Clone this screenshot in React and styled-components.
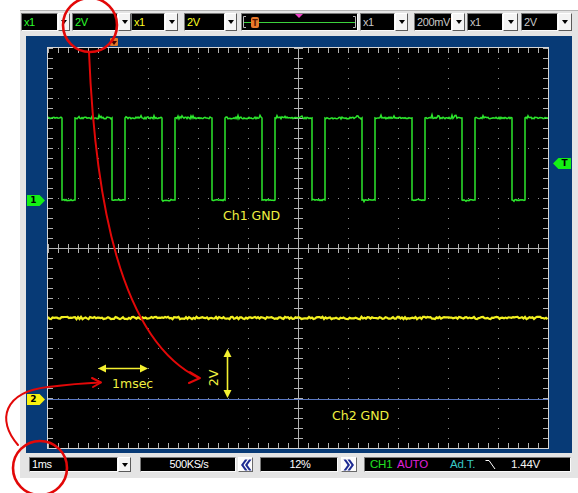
import React from 'react'
import styled, { createGlobalStyle } from 'styled-components'

const GlobalStyle = createGlobalStyle`
  html, body {
    margin: 0;
    padding: 0;
    background: #fff;
  }
  body {
    font-family: "Liberation Sans", Arial, sans-serif;
  }
`

const Page = styled.div`
  position: relative;
  width: 578px;
  height: 493px;
  overflow: hidden;
  padding: 10px 0 0 20px;
  box-sizing: border-box;
  background: #fff;
`

const Window = styled.div`
  width: 558px;
  height: 468px;
  background: #e4e4e4;
  border-top: 1px solid #b4b4b4;
  box-sizing: border-box;
  display: flex;
  flex-direction: column;
`

const Toolbar = styled.div`
  display: flex;
  height: 18px;
  margin: 2px 0 0 1px;
`

const BottomBar = styled.div`
  display: flex;
  height: 15px;
  margin: 4px 0 0 9px;
`

const Combo = styled.div`
  display: flex;
  margin-left: ${p => p.$ml || 0}px;
`

const Field = styled.div`
  width: ${p => p.$w}px;
  background: #000;
  color: ${p => p.$color || '#fff'};
  font-size: 11px;
  letter-spacing: -0.4px;
  line-height: ${p => (p.$small ? 13 : 16)}px;
  padding-left: 2px;
  text-align: ${p => (p.$center ? 'center' : 'left')};
  box-sizing: border-box;
  border: 1px solid;
  border-color: #7a7a7a #fafafa #fafafa #7a7a7a;
  white-space: nowrap;
  overflow: hidden;
`

const DropBtn = styled.div`
  width: ${p => p.$w}px;
  background: #f4f4f4;
  border: 1px solid;
  border-color: #ffffff #5a5a5a #5a5a5a #ffffff;
  box-sizing: border-box;
  display: flex;
  align-items: center;
  justify-content: center;

  &::after {
    content: '';
    border-left: 3.5px solid transparent;
    border-right: 3.5px solid transparent;
    border-top: 4px solid #000;
  }
`

const Slider = styled.div`
  width: 117px;
  margin-left: 4px;
  background: #000;
  border: 1px solid;
  border-color: #7a7a7a #fafafa #fafafa #7a7a7a;
  box-sizing: border-box;

  svg {
    display: block;
  }
`

const NavBtn = styled.div`
  width: ${p => p.$w}px;
  margin-left: ${p => p.$ml || 0}px;
  background: #fcfcfc;
  border: 1px solid;
  border-color: #ffffff #6a6a6a #6a6a6a #ffffff;
  box-sizing: border-box;
  display: flex;
  align-items: center;
  justify-content: center;
`

const Status = styled.div`
  display: flex;
  width: 207px;
  margin-left: 7px;
  background: #000;
  border: 1px solid;
  border-color: #7a7a7a #fafafa #fafafa #7a7a7a;
  box-sizing: border-box;
  padding-left: 5px;
  font-size: 11.5px;
  letter-spacing: -0.2px;
  line-height: 13px;
  align-items: center;
`

const Label = styled.span`
  width: ${p => p.$w}px;
  color: ${p => p.$color};
  flex-shrink: 0;
  display: flex;
  align-items: center;
`

const Panel = styled.div`
  position: relative;
  width: 546px;
  height: 417px;
  margin: 5px 0 0 6px;
  padding: 12px 24px 5px 22px;
  box-sizing: border-box;
  background: #073a76;
`

const Screen = styled.div`
  width: 500px;
  height: 400px;
  background: #000;
  box-shadow: 0 0 0 1px #d6d6d6;

  svg {
    display: block;
  }
`

const Marker = styled.div`
  position: absolute;
  top: ${p => p.$top}px;
  left: ${p => p.$left}px;
  width: 18px;
  height: 11px;
  background: ${p => p.$bg};
  clip-path: ${p =>
    p.$dir === 'left'
      ? 'polygon(0 50%, 30% 0, 100% 0, 100% 100%, 30% 100%)'
      : 'polygon(0 0, 70% 0, 100% 50%, 70% 100%, 0 100%)'};
  color: #000;
  font-family: "DejaVu Sans", sans-serif;
  font-size: 9px;
  font-weight: bold;
  line-height: 11px;
  text-align: center;
  padding: ${p => (p.$dir === 'left' ? '0 0 0 5px' : '0 5px 0 0')};
  box-sizing: border-box;
`

const TrigPos = styled.div`
  position: absolute;
  top: 2px;
  left: 84px;
  width: 8px;
  height: 8px;
  background: #e07a2a;
  border-radius: 1px;

  &::after {
    content: '';
    position: absolute;
    left: 1px;
    top: 3px;
    border-left: 3px solid transparent;
    border-right: 3px solid transparent;
    border-top: 4px solid #400;
  }
`

const Overlay = styled.svg`
  position: absolute;
  top: 0;
  left: 0;
  pointer-events: none;
`

const rand = seed => {
  let s = seed
  return () => {
    s = (s * 16807) % 2147483647
    return s / 2147483647
  }
}

const ch1Points = (() => {
  const r = rand(11)
  const hi = 70
  const lo = 152
  const pts = []
  const high = x => pts.push([x, hi + (r() - 0.5) * 1.8 - (r() > 0.85 ? r() * 3 : 0)])
  const low = x => pts.push([x, lo + (r() - 0.5) * 1.2 + (r() > 0.9 ? r() * 1.6 : 0)])
  let from = 0
  for (let k = 0; k < 10; k++) {
    const fall = 14 + 50 * k
    const rise = 27 + 50 * k
    for (let x = from; x < fall; x++) high(x)
    pts.push([fall, hi])
    pts.push([fall, lo])
    for (let x = fall + 1; x < rise; x++) low(x)
    pts.push([rise, lo])
    pts.push([rise, hi])
    from = rise + 1
  }
  for (let x = from; x <= 500; x++) high(x)
  return pts.map(p => p[0] + ',' + p[1].toFixed(1)).join(' ')
})()

const ch2Points = (() => {
  const r = rand(29)
  const pts = []
  for (let x = 0; x <= 500; x += 1.5) pts.push(x + ',' + (270 + (r() - 0.5) * 2.4).toFixed(1))
  return pts.join(' ')
})()

const majorX = [50, 100, 150, 200, 300, 350, 400, 450]
const majorY = [50, 100, 150, 250, 300, 350]

const topRow = [
  { ml: 0, w: 37, bw: 12, text: 'x1', color: '#2cff2c' },
  { ml: 2, w: 46, bw: 13, text: '2V', color: '#2cff2c' },
  { ml: 0, w: 34, bw: 13, text: 'x1', color: '#ffff20' },
  { ml: 6, w: 41, bw: 12, text: '2V', color: '#ffff20' },
]

const topRowRight = [
  { ml: 2, w: 35, bw: 13, text: 'x1', color: '#c8c8c8' },
  { ml: 6, w: 38, bw: 13, text: '200mV', color: '#c8c8c8' },
  { ml: 2, w: 36, bw: 15, text: 'x1', color: '#c8c8c8' },
  { ml: 3, w: 37, bw: 14, text: '2V', color: '#c8c8c8' },
]

function Chevrons({ dir }) {
  const flip = dir === 'right' ? 'translate(12,0) scale(-1,1)' : undefined
  return (
    <svg width="12" height="12" viewBox="0 0 12 12">
      <g transform={flip} fill="#1c2a92">
        <polygon points="5,0.5 7.5,0.5 3.5,6 7.5,11.5 5,11.5 1,6" />
        <polygon points="9,0.5 11.5,0.5 7.5,6 11.5,11.5 9,11.5 5,6" />
      </g>
    </svg>
  )
}

function Scope() {
  return (
    <svg width="500" height="400" viewBox="0 0 500 400" shapeRendering="crispEdges">
      <g stroke="#8c8c8c" strokeWidth="1" strokeDasharray="1 9">
        {majorX.map(x => (
          <line key={'x' + x} x1={x + 0.5} y1="0" x2={x + 0.5} y2="400" />
        ))}
        {majorY.map(y => (
          <line key={'y' + y} x1="0" y1={y + 0.5} x2="500" y2={y + 0.5} />
        ))}
      </g>
      <g stroke="#b4b4b4">
        <line x1="250.5" y1="0" x2="250.5" y2="400" />
        <line x1="0" y1="200.5" x2="500" y2="200.5" />
        <line x1="250.5" y1="0" x2="250.5" y2="400" strokeWidth="9" strokeDasharray="1 9" />
        <line x1="0" y1="200.5" x2="500" y2="200.5" strokeWidth="9" strokeDasharray="1 9" />
        <line x1="0" y1="2.5" x2="500" y2="2.5" strokeWidth="5" strokeDasharray="1 9" />
        <line x1="0" y1="397.5" x2="500" y2="397.5" strokeWidth="5" strokeDasharray="1 9" />
        <line x1="2.5" y1="0" x2="2.5" y2="400" strokeWidth="5" strokeDasharray="1 9" />
        <line x1="497.5" y1="0" x2="497.5" y2="400" strokeWidth="5" strokeDasharray="1 9" />
      </g>
      <line x1="0" y1="351.5" x2="500" y2="351.5" stroke="#5a78c2" />
      <g shapeRendering="auto">
        <polyline points={ch1Points} fill="none" stroke="#2ce62c" strokeWidth="1.5" />
        <polyline points={ch2Points} fill="none" stroke="#f2f020" strokeWidth="2.2" />
        <g fill="#f4f030" stroke="#f4f030">
          <line x1="55" y1="320.5" x2="95" y2="320.5" strokeWidth="1.6" />
          <polygon points="50,320.5 58,316.5 58,324.5" stroke="none" />
          <polygon points="100,320.5 92,316.5 92,324.5" stroke="none" />
          <line x1="179.5" y1="306" x2="179.5" y2="345" strokeWidth="1.6" />
          <polygon points="179.5,301 175.5,309 183.5,309" stroke="none" />
          <polygon points="179.5,350 175.5,342 183.5,342" stroke="none" />
        </g>
        <g fill="#f0f040" fontFamily='"DejaVu Sans", sans-serif' fontSize="12.5">
          <text x="175" y="172">Ch1 GND</text>
          <text x="284" y="372">Ch2 GND</text>
          <text x="64" y="340">1msec</text>
          <text transform="translate(170,330) rotate(-90)" textAnchor="middle">2V</text>
        </g>
      </g>
    </svg>
  )
}

export default function App() {
  return (
    <Page>
      <GlobalStyle />
      <Window>
        <Toolbar>
          {topRow.map((c, i) => (
            <Combo key={i} $ml={c.ml}>
              <Field $w={c.w} $color={c.color}>{c.text}</Field>
              <DropBtn $w={c.bw} />
            </Combo>
          ))}
          <Slider>
            <svg width="115" height="16" viewBox="0 0 115 16">
              <g stroke="#b8b8b8" fill="none">
                <polyline points="4,2.5 1.5,2.5 1.5,13.5 4,13.5" />
                <polyline points="111,2.5 113.5,2.5 113.5,13.5 111,13.5" />
              </g>
              <line x1="2" y1="8.5" x2="113" y2="8.5" stroke="#3cd23c" />
              <polygon points="53,0 61,0 57,4" fill="#f040c8" />
              <rect x="9" y="3" width="8" height="11" rx="2" fill="#e8782a" />
              <text x="13" y="12" fontSize="8" fontWeight="bold" textAnchor="middle" fill="#5a1800" fontFamily='"DejaVu Sans", sans-serif'>T</text>
            </svg>
          </Slider>
          {topRowRight.map((c, i) => (
            <Combo key={i} $ml={c.ml}>
              <Field $w={c.w} $color={c.color}>{c.text}</Field>
              <DropBtn $w={c.bw} />
            </Combo>
          ))}
        </Toolbar>

        <Panel>
          <Screen>
            <Scope />
          </Screen>
          <TrigPos />
          <Marker $top={159} $left={1} $bg="#14f014">1</Marker>
          <Marker $top={358} $left={1} $bg="#f8f010">2</Marker>
          <Marker $top={122} $left={527} $bg="#14f014" $dir="left">T</Marker>
        </Panel>

        <BottomBar>
          <Combo>
            <Field $w={89} $small>1ms</Field>
            <DropBtn $w={13} />
          </Combo>
          <Combo $ml={9}>
            <Field $w={96} $small $center>500KS/s</Field>
          </Combo>
          <NavBtn $w={15} $ml={2}>
            <Chevrons dir="left" />
          </NavBtn>
          <Combo $ml={7}>
            <Field $w={78} $small $center>12%</Field>
          </Combo>
          <NavBtn $w={16} $ml={3}>
            <Chevrons dir="right" />
          </NavBtn>
          <Status>
            <Label $w={27} $color="#22e022">CH1</Label>
            <Label $w={53} $color="#e020d8">AUTO</Label>
            <Label $w={35} $color="#38c8c8">Ad.T.</Label>
            <Label $w={26} $color="#fff">
              <svg width="12" height="11" viewBox="0 0 12 11">
                <polyline points="0.5,1.5 4,1.5 10,10" fill="none" stroke="#fff" strokeWidth="1" />
              </svg>
            </Label>
            <Label $w={40} $color="#f4f4f4">1.44V</Label>
          </Status>
        </BottomBar>
      </Window>

      <Overlay width="578" height="493" viewBox="0 0 578 493">
        <g fill="none" stroke="#e20808" strokeWidth="2.6" strokeLinecap="round" strokeLinejoin="round">
          <circle cx="90" cy="25" r="27" />
          <circle cx="40" cy="468" r="27" />
          <path d="M89 52 C95 200 120 340 199 378" strokeWidth="2" />
          <path d="M190 372 L200 378 L189 383" strokeWidth="2" />
          <path d="M18 445 C-4 420 4 392 48 387 C72 384 88 383 100 382.5" strokeWidth="2" />
          <path d="M92 378 L101 382.5 L93 387" strokeWidth="2" />
        </g>
      </Overlay>
    </Page>
  )
}
